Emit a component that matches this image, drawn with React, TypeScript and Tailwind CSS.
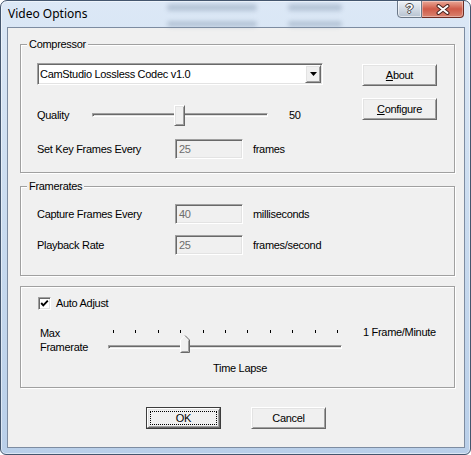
import type { ReactNode } from "react";

const ui = "font-['Liberation_Sans',Arial,sans-serif] text-[11px] leading-[13px] tracking-[-0.3px] text-black";

// classic 3D edges
const raised =
  "border border-t-white border-l-white border-r-[#696969] border-b-[#696969] bg-[#f0f0f0] shadow-[inset_1px_1px_0_#e3e3e3,inset_-1px_-1px_0_#a0a0a0]";
const sunken =
  "border border-t-[#a0a0a0] border-l-[#a0a0a0] border-r-white border-b-white shadow-[inset_1px_1px_0_#696969,inset_-1px_-1px_0_#e3e3e3]";
const groove =
  "h-[4px] border border-t-[#a0a0a0] border-l-[#a0a0a0] border-r-white border-b-white bg-[#e3e3e3] shadow-[inset_1px_1px_0_#696969]";

function Group({ label, className, children }: { label?: string; className: string; children: ReactNode }) {
  return (
    <div className={`ml-[12px] w-[435px] border border-[#a0a0a0] shadow-[inset_1px_1px_0_#fff,1px_1px_0_#fff] ${className}`}>
      {label ? <div className="-mt-[7px] ml-[6px] w-fit bg-[#f0f0f0] px-[2px]">{label}</div> : null}
      {children}
    </div>
  );
}

function Field({ value }: { value: string }) {
  return (
    <div className={`${sunken} flex h-[20px] w-[68px] items-center bg-[#f0f0f0] pl-[3px] text-[#6d6d6d]`}>{value}</div>
  );
}

function Btn({ children, className = "" }: { children: ReactNode; className?: string }) {
  return (
    <button type="button" className={`${raised} flex h-[22px] w-[75px] items-center justify-center ${className}`}>
      {children}
    </button>
  );
}

function Row({ label, value, unit, className }: { label: string; value: string; unit: string; className: string }) {
  return (
    <div className={`flex h-[20px] items-center ${className}`}>
      <span className="w-[138px]">{label}</span>
      <Field value={value} />
      <span className="ml-[10px]">{unit}</span>
    </div>
  );
}

export default function App() {
  return (
    <div className="relative flex h-[455px] w-[471px] flex-col overflow-hidden rounded-t-[7px] rounded-b-[6px] border border-[#44566e] bg-gradient-to-b from-[#dce8f6] via-[#c9dbef] to-[#b9cfe9] pb-[6px] pl-[6px] pr-[5px] shadow-[inset_0_0_0_1px_rgba(255,255,255,0.5)]">
      {/* glass showing blurred windows behind */}
      <div className="pointer-events-none absolute left-[166px] top-[3px] h-[7px] w-[90px] rounded bg-[#7f93ab] opacity-40 blur-[2px]" />
      <div className="pointer-events-none absolute left-[287px] top-[3px] h-[7px] w-[54px] rounded bg-[#7f93ab] opacity-40 blur-[2px]" />
      <div className="pointer-events-none absolute left-[166px] top-[20px] h-[6px] w-[90px] rounded bg-[#7f93ab] opacity-40 blur-[2px]" />
      <div className="pointer-events-none absolute left-[287px] top-[20px] h-[6px] w-[54px] rounded bg-[#7f93ab] opacity-40 blur-[2px]" />

      {/* title bar */}
      <div className="flex h-[26px] items-start">
        <span className="ml-[1px] mt-[5px] font-['Noto_Sans',sans-serif] text-[12px] leading-[16px] text-black">
          Video Options
        </span>
        <div className="relative -mt-[1px] ml-auto mr-[1px] flex">
          <div className="flex h-[18px] w-[25px] items-center justify-center rounded-bl-[4px] border border-[#6b7888] bg-gradient-to-b from-[#eef2f7] via-[#d3dbe5] to-[#b6c2d0] shadow-[inset_0_0_0_1px_rgba(255,255,255,0.6)]">
            <span className="font-['Liberation_Sans',Arial,sans-serif] text-[13px] font-bold leading-[14px] text-white [text-shadow:1px_0_#454545,-1px_0_#454545,0_1px_#454545,0_-1px_#454545]">
              ?
            </span>
          </div>
          <div className="flex h-[18px] w-[42px] items-center justify-center rounded-br-[4px] border border-l-0 border-[#6e2b22] bg-gradient-to-b from-[#e9a797] via-[#cf5a48] to-[#d9826f] shadow-[inset_0_0_0_1px_rgba(255,255,255,0.35)]">
            <svg width="14" height="11" viewBox="0 0 14 11">
              <path d="M2.5 2 L11.5 9 M11.5 2 L2.5 9" stroke="#4a2420" strokeWidth="4" strokeLinecap="round" />
              <path d="M2.5 2 L11.5 9 M11.5 2 L2.5 9" stroke="#ffffff" strokeWidth="2" strokeLinecap="round" />
            </svg>
          </div>
        </div>
      </div>

      {/* client area */}
      <div className={`flex flex-1 flex-col border border-[#7d8ca1] bg-[#f0f0f0] ${ui}`}>
        <Group label="Compressor" className="mt-[16px] h-[129px]">
          <div className="mt-[12px] flex pl-[16px]">
            <div className="w-[286px]">
              <div className={`${sunken} flex h-[22px] items-center bg-white pl-[2px] pr-[1px]`}>
                <span className="flex-1">CamStudio Lossless Codec v1.0</span>
                <div className={`${raised} flex h-[18px] w-[16px] items-center justify-center`}>
                  <svg width="7" height="4" viewBox="0 0 7 4">
                    <polygon points="0,0 7,0 3.5,4" fill="#000" />
                  </svg>
                </div>
              </div>

              <div className="mt-[20px] flex h-[21px] items-center">
                <span className="w-[55px]">Quality</span>
                <div className="relative h-[21px] w-[176px] pt-[8px]">
                  <div className={groove} />
                  <div className={`absolute left-[82px] top-0 h-[21px] w-[11px] ${raised}`} />
                </div>
                <span className="ml-[21px]">50</span>
              </div>

              <Row className="mt-[13px]" label="Set Key Frames Every" value="25" unit="frames" />
            </div>

            <div className="ml-[39px] pt-[1px]">
              <Btn>
                <span className="underline underline-offset-[1px]">A</span>bout
              </Btn>
              <Btn className="mt-[12px]">
                <span className="underline underline-offset-[1px]">C</span>onfigure
              </Btn>
            </div>
          </div>
        </Group>

        <Group label="Framerates" className="mt-[13px] h-[90px]">
          <div className="pl-[16px]">
            <Row className="mt-[11px]" label="Capture Frames Every" value="40" unit="milliseconds" />
            <Row className="mt-[11px]" label="Playback Rate" value="25" unit="frames/second" />
          </div>
        </Group>

        <Group className="mt-[10px] h-[102px]">
          <div className="mt-[10px] flex items-center pl-[17px]">
            <div className={`${sunken} flex h-[13px] w-[13px] items-center justify-center bg-white`}>
              <svg width="9" height="9" viewBox="0 0 9 9">
                <polyline points="1.2,4 3.3,6.3 7.8,1.6" fill="none" stroke="#000" strokeWidth="1.9" />
              </svg>
            </div>
            <span className="ml-[5px]">Auto Adjust</span>
          </div>

          <div className="mt-[16px] flex items-start pl-[19px]">
            <div className="w-[68px] leading-[14px]">
              Max
              <br />
              Framerate
            </div>
            <div className="relative h-[30px] w-[234px] pt-[19px]">
              <div className="absolute left-[5px] top-[4px] flex w-[225px] justify-between">
                {Array.from({ length: 11 }).map((_, i) => (
                  <span key={i} className="h-[3px] w-px bg-black" />
                ))}
              </div>
              <div className={groove} />
              <svg className="absolute left-[72px] top-[9px]" width="10" height="18" viewBox="0 0 10 18">
                <polygon points="0.5,5 5,0.5 9.5,5 9.5,17.5 0.5,17.5" fill="#f0f0f0" />
                <polyline points="0.5,17.5 0.5,5 5,0.5" fill="none" stroke="#ffffff" strokeWidth="1" />
                <polyline points="5,0.5 9.5,5 9.5,17.5 0.5,17.5" fill="none" stroke="#696969" strokeWidth="1" />
                <polyline points="8.5,5.5 8.5,16.5 1.5,16.5" fill="none" stroke="#a0a0a0" strokeWidth="1" />
              </svg>
            </div>
            <span className="-mt-[1px] ml-[21px] leading-[14px]">1 Frame/Minute</span>
          </div>
          <div className="mt-[6px] pl-[192px]">Time Lapse</div>
        </Group>

        <div className="mt-[19px] flex justify-center gap-[30px]">
          <div className="h-[22px] w-[75px] border border-[#3c3c3c]">
            <button
              type="button"
              className={`${raised} relative flex h-[20px] w-[73px] items-center justify-center`}
            >
              OK
              <span className="absolute bottom-[2px] left-[2px] right-[2px] top-[2px] border border-dotted border-black" />
            </button>
          </div>
          <Btn>Cancel</Btn>
        </div>
      </div>
    </div>
  );
}
